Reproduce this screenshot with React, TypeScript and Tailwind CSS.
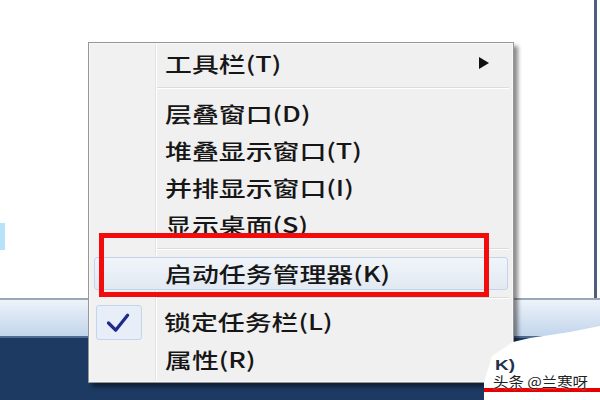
import React from "react";

type Row = { label: string; sub?: boolean };

const MenuText: React.FC<{ children: React.ReactNode }> = ({ children }) => (
  <span className="inline-block origin-left scale-x-[1.28] text-[21px] leading-none font-medium text-[#161616] whitespace-nowrap">
    {children}
  </span>
);

const Separator: React.FC<{ h: string }> = ({ h }) => (
  <div className={`${h} flex flex-col justify-center pl-[68px] pr-[4px]`}>
    <div className="h-px bg-[#dcdcdc]" />
    <div className="h-px bg-white" />
  </div>
);

const App: React.FC = () => {
  const windowRows: Row[] = [
    { label: "层叠窗口(D)" },
    { label: "堆叠显示窗口(T)" },
    { label: "并排显示窗口(I)" },
    { label: "显示桌面(S)" },
  ];

  return (
    <div className="relative w-[600px] h-[400px] overflow-hidden bg-white font-['Noto_Sans_CJK_SC','Noto_Sans',sans-serif]">
      {/* desktop: window area */}
      <div className="flex h-[298px]">
        <div className="w-[5px] flex flex-col">
          <div className="h-[223px]" />
          <div className="h-[27px] bg-[#b8e2f7]" />
        </div>
        <div className="flex-1" />
        <div className="w-[3px] bg-[#4f5f7b]" />
        <div className="w-[3px]" />
      </div>

      {/* taskbar */}
      <div className="h-[2px] bg-[#9ba7b6]" />
      <div className="h-[36px] bg-linear-to-b from-[#edf3fa] to-[#c2d5eb]" />
      <div className="h-[2px] bg-[#4e6a90]" />
      <div className="h-[62px] bg-[#1c3a62]" />

      {/* context menu */}
      <div className="absolute left-[88px] top-[42px] w-[426px] h-[341px] border border-[#979797] py-[2px] flex flex-col shadow-[inset_0_0_0_1px_#f7f7f7,4px_4px_4px_rgba(0,0,0,0.45)] bg-[linear-gradient(to_right,#f1f1f1_0px,#f1f1f1_66px,#e2e3e3_66px,#e2e3e3_67px,#ffffff_67px,#ffffff_68px,#f0f0f0_68px)]">
        <div className="h-[36px] flex items-center pl-[76px] pr-[24px]">
          <MenuText>工具栏(T)</MenuText>
          <svg className="ml-auto" width="11" height="12" viewBox="0 0 11 12">
            <polygon points="1,0 11,6 1,12" fill="#111" />
          </svg>
        </div>

        <Separator h="h-[14px]" />

        {windowRows.map((r) => (
          <div key={r.label} className="h-[37px] flex items-center pl-[76px]">
            <MenuText>{r.label}</MenuText>
          </div>
        ))}

        <Separator h="h-[12px]" />

        {/* hovered item */}
        <div className="h-[37px] py-[2px] px-[5px]">
          <div className="h-full rounded-[3px] border border-[#c3d4ea] bg-linear-to-b from-[#f1f5fa] to-[#e2e9f2] flex items-center pl-[70px]">
            <MenuText>启动任务管理器(K)</MenuText>
          </div>
        </div>

        <Separator h="h-[12px]" />

        <div className="h-[37px] flex items-center pl-[7px]">
          <div className="w-[46px] h-[35px] rounded-[3px] border border-[#c2d5ec] bg-[#e8eef7] flex items-center justify-center">
            <svg width="46" height="35" viewBox="0 0 46 35">
              <path d="M12 18 L19.5 25.5 L32 10" fill="none" stroke="#1f2a8c" strokeWidth="3.4" strokeLinecap="round" strokeLinejoin="round" />
            </svg>
          </div>
          <div className="ml-[22px]">
            <MenuText>锁定任务栏(L)</MenuText>
          </div>
        </div>

        <div className="h-[37px] flex items-center pl-[76px]">
          <MenuText>属性(R)</MenuText>
        </div>
      </div>

      {/* red annotation frame */}
      <div className="absolute left-[99px] top-[233px] w-[390px] h-[64px] border-[5px] border-[#f20c0c]" />

      {/* watermark patch */}
      <div className="absolute left-[484px] top-[326px] w-[116px] h-[74px] bg-white flex flex-col [clip-path:polygon(0px_56px,8px_30px,29px_16px,46px_12px,66px_9px,86px_6px,116px_0px,116px_74px,0px_74px)]">
        <div className="h-[31px]" />
        <div className="h-[15px] pl-[11px] flex items-center">
          <span className="inline-block origin-left scale-x-[1.35] text-[14px] leading-none font-['Liberation_Sans',sans-serif] font-bold text-[#24324c]">
            K)
          </span>
        </div>
        <div className="h-[2px]" />
        <div className="h-[14px] pl-[9px] flex items-center">
          <span className="inline-block origin-left scale-x-[1.1] text-[14px] leading-none text-[#222] whitespace-nowrap [text-shadow:0_0_2px_#fff]">
            头条 @兰寒呀
          </span>
        </div>
        <div className="h-[4px] bg-[#e60000]" />
      </div>
    </div>
  );
};

export default App;
